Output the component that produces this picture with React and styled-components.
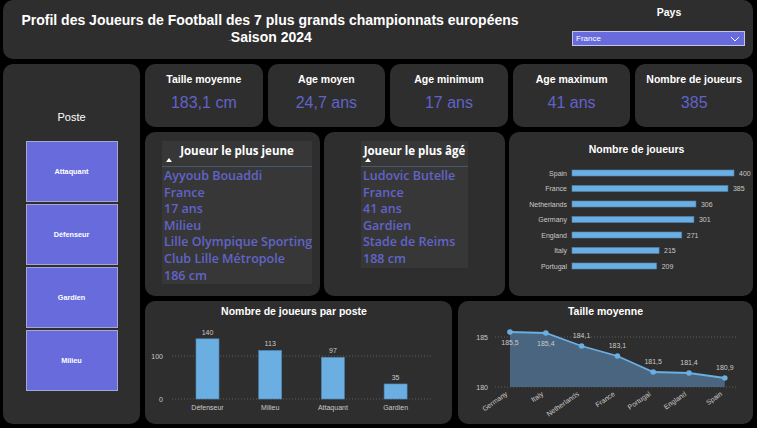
import React from 'react';
import styled, { createGlobalStyle } from 'styled-components';

const GlobalStyle = createGlobalStyle`
  html, body {
    margin: 0;
    padding: 0;
    background: #000;
  }
  body {
    font-family: "Liberation Sans", Arial, sans-serif;
  }
`;

const Page = styled.div`
  width: 757px;
  height: 428px;
  box-sizing: border-box;
  padding: 0 4px 4px 3px;
  display: flex;
  flex-direction: column;
  gap: 5px;
  background: #000;
`;

const Panel = styled.div`
  background: #2f2e2e;
  border-radius: 10px;
  box-sizing: border-box;
  overflow: hidden;
`;

const Header = styled(Panel)`
  height: 59px;
  flex: none;
  display: flex;
`;

const TitleBlock = styled.div`
  width: 534px;
  padding-top: 12px;
  text-align: center;
  color: #fff;
  font-weight: bold;
  font-size: 14px;
  line-height: 17px;
`;

const Dash = styled.span`
  color: #8a8a8a;
  font-size: 8px;
  font-weight: normal;
`;

const PaysBlock = styled.div`
  flex: 1;
  padding: 5px 8px 0 35px;
  display: flex;
  flex-direction: column;
`;

const PaysLabel = styled.div`
  color: #fff;
  font-weight: bold;
  font-size: 10.5px;
  line-height: 14px;
  text-align: center;
  padding-left: 21px;
`;

const Dropdown = styled.div`
  margin-top: 12px;
  height: 15px;
  box-sizing: border-box;
  background: #676bdc;
  border: 1px solid #c3c4e6;
  display: flex;
  align-items: center;
  justify-content: space-between;
  padding: 0 4px 0 3px;
  color: #fff;
  font-size: 8px;
`;

const Body = styled.div`
  height: 360px;
  display: flex;
  gap: 5px;
`;

const Side = styled(Panel)`
  width: 137px;
  flex: none;
  padding-top: 46px;
  display: flex;
  flex-direction: column;
  align-items: center;
`;

const SideTitle = styled.div`
  color: #fff;
  font-size: 11px;
  line-height: 14px;
  margin-bottom: 17px;
`;

const PosteList = styled.div`
  display: flex;
  flex-direction: column;
  gap: 2px;
`;

const PosteButton = styled.div`
  width: 92px;
  height: 61px;
  box-sizing: border-box;
  background: #676bdc;
  border: 1px solid #a6a7cf;
  display: flex;
  align-items: center;
  justify-content: center;
  color: #fff;
  font-weight: bold;
  font-size: 7.3px;
`;

const Main = styled.div`
  flex: 1;
  display: grid;
  grid-template-rows: 63px 164px 123px;
  row-gap: 5px;
`;

const KpiRow = styled.div`
  display: grid;
  grid-template-columns: repeat(5, 1fr);
  column-gap: 5px;
`;

const KpiCard = styled(Panel)`
  padding-top: 9px;
  text-align: center;
`;

const KpiLabel = styled.div`
  color: #fff;
  font-weight: bold;
  font-size: 10.5px;
  line-height: 13px;
`;

const KpiValue = styled.div`
  margin-top: 7px;
  color: #5f63c8;
  font-size: 16px;
  line-height: 20px;
`;

const MidRow = styled.div`
  display: grid;
  grid-template-columns: 175px 181px 1fr;
  column-gap: 4px;
`;

const BottomRow = styled.div`
  display: grid;
  grid-template-columns: 307px 1fr;
  column-gap: 6px;
`;

const PlayerCard = styled(Panel)`
  padding-top: 9px;
  padding-left: ${(p) => p.$offset}px;
`;

const PlayerTable = styled.div`
  width: ${(p) => p.$width}px;
  background: #383737;
  font-family: "Open Sans", "Liberation Sans", sans-serif;
`;

const TableHead = styled.div`
  padding: 3px 0 4px;
  border-bottom: 1px solid #43596f;
  display: flex;
  flex-direction: column;
`;

const HeadText = styled.div`
  color: #fff;
  font-weight: 700;
  font-size: 11.5px;
  line-height: 14px;
  text-align: center;
  white-space: nowrap;
`;

const Caret = styled.span`
  width: 0;
  height: 0;
  margin-left: 4px;
  border-left: 3px solid transparent;
  border-right: 3px solid transparent;
  border-bottom: 4px solid #fff;
`;

const Rows = styled.div`
  padding: 1px 0 0 2px;
`;

const RowText = styled.div`
  color: #6064c9;
  font-size: 12.5px;
  font-weight: 600;
  line-height: 16.6px;
  white-space: nowrap;
`;

const ChartCard = styled(Panel)`
  display: flex;
  flex-direction: column;
`;

const ChartTitle = styled.div`
  color: #fff;
  font-weight: bold;
  font-size: 10.5px;
  line-height: 13px;
  text-align: center;
  padding-top: ${(p) => p.$top}px;
  padding-left: ${(p) => p.$shift || 0}px;
  padding-right: ${(p) => p.$pull || 0}px;
`;

const Chart = styled.svg`
  display: block;
  font-family: "Liberation Sans", Arial, sans-serif;
  font-size: 7px;
`;

const kpis = [
  ['Taille moyenne', '183,1 cm'],
  ['Age moyen', '24,7 ans'],
  ['Age minimum', '17 ans'],
  ['Age maximum', '41 ans'],
  ['Nombre de joueurs', '385'],
];

const youngest = ['Ayyoub Bouaddi', 'France', '17 ans', 'Milieu', 'Lille Olympique Sporting', 'Club Lille Métropole', '186 cm'];
const oldest = ['Ludovic Butelle', 'France', '41 ans', 'Gardien', 'Stade de Reims', '188 cm'];

const countries = [
  ['Spain', 400],
  ['France', 385],
  ['Netherlands', 306],
  ['Germany', 301],
  ['England', 271],
  ['Italy', 215],
  ['Portugal', 209],
];

const postes = [
  ['Défenseur', 140],
  ['Milieu', 113],
  ['Attaquant', 97],
  ['Gardien', 35],
];

const heights = [
  ['Germany', 185.5, '185,5', 'below'],
  ['Italy', 185.4, '185,4', 'below'],
  ['Netherlands', 184.1, '184,1', 'above'],
  ['France', 183.1, '183,1', 'above'],
  ['Portugal', 181.5, '181,5', 'above'],
  ['England', 181.4, '181,4', 'above'],
  ['Spain', 180.9, '180,9', 'above'],
];

const BAR = '#6aaee2';
const BAR_EDGE = '#4d86b4';
const LABEL = '#c9c9c9';

const CountryChart = () => (
  <Chart width="245" height="140">
    {countries.map(([name, v], i) => {
      const y = 17 + i * 15.5;
      const w = v * 0.405;
      return (
        <g key={name}>
          <text x="58" y={y + 2.5} textAnchor="end" fill={LABEL}>{name}</text>
          <rect x="63" y={y - 3} width={w} height="6" fill={BAR} stroke={BAR_EDGE} strokeWidth="0.6" />
          <text x={63 + w + 5} y={y + 2.5} fill={LABEL}>{v}</text>
        </g>
      );
    })}
  </Chart>
);

const PosteChart = () => {
  const base = 81;
  const k = 0.43;
  return (
    <Chart width="307" height="106">
      <line x1="27" x2="288" y1="38" y2="38" stroke="#6a6a6a" strokeWidth="0.8" strokeDasharray="1 2" />
      <line x1="27" x2="288" y1={base} y2={base} stroke="#6a6a6a" strokeWidth="0.8" strokeDasharray="1 2" />
      <text x="18" y="40.5" textAnchor="end" fill={LABEL}>100</text>
      <text x="18" y={base + 2.5} textAnchor="end" fill={LABEL}>0</text>
      {postes.map(([name, v], i) => {
        const x = 51 + i * 62.7;
        const h = v * k;
        return (
          <g key={name}>
            <rect x={x} y={base - h} width="23" height={h} fill={BAR} stroke={BAR_EDGE} strokeWidth="0.6" />
            <text x={x + 11.5} y={base - h - 4} textAnchor="middle" fill={LABEL}>{v}</text>
            <text x={x + 11.5} y={base + 10.5} textAnchor="middle" fill={LABEL}>{name}</text>
          </g>
        );
      })}
    </Chart>
  );
};

const HeightChart = () => {
  const yOf = (v) => 69 - (v - 180) * 10;
  const xOf = (i) => 52 + i * 35.8;
  const pts = heights.map(([, v], i) => `${xOf(i)},${yOf(v)}`).join(' ');
  const area = `${xOf(0)},69 ${pts} ${xOf(heights.length - 1)},69`;
  return (
    <Chart width="295" height="106">
      <line x1="37" x2="280" y1={yOf(185)} y2={yOf(185)} stroke="#6a6a6a" strokeWidth="0.8" strokeDasharray="1 2" />
      <line x1="37" x2="280" y1="69" y2="69" stroke="#6a6a6a" strokeWidth="0.8" strokeDasharray="1 2" />
      <text x="30" y={yOf(185) + 2.5} textAnchor="end" fill={LABEL}>185</text>
      <text x="30" y="71.5" textAnchor="end" fill={LABEL}>180</text>
      <polygon points={area} fill="#4a6580" />
      <polyline points={pts} fill="none" stroke={BAR} strokeWidth="1.8" />
      {heights.map(([name, v, label, pos], i) => {
        const x = xOf(i);
        const y = yOf(v);
        const ly = pos === 'below' ? y + 13 : y - 8;
        return (
          <g key={name}>
            <circle cx={x} cy={y} r="2.8" fill={BAR} />
            <text x={x} y={ly} textAnchor="middle" fill={LABEL}>{label}</text>
            <text
              x={x - 2}
              y="77"
              textAnchor="end"
              fill={LABEL}
              transform={`rotate(-35 ${x - 2} 77)`}
            >
              {name}
            </text>
          </g>
        );
      })}
    </Chart>
  );
};

const PlayerBlock = ({ title, rows, width, offset }) => (
  <PlayerCard $offset={offset}>
    <PlayerTable $width={width}>
      <TableHead>
        <HeadText>{title}</HeadText>
        <Caret />
      </TableHead>
      <Rows>
        {rows.map((r) => (
          <RowText key={r}>{r}</RowText>
        ))}
      </Rows>
    </PlayerTable>
  </PlayerCard>
);

const App = () => (
  <>
    <GlobalStyle />
    <Page>
      <Header>
        <TitleBlock>
          Profil des Joueurs de Football des 7 plus grands championnats européens
          <br />
          <Dash>-</Dash>Saison 2024
        </TitleBlock>
        <PaysBlock>
          <PaysLabel>Pays</PaysLabel>
          <Dropdown>
            <span>France</span>
            <svg width="10" height="6" viewBox="0 0 10 6">
              <polyline points="1,1 5,5 9,1" fill="none" stroke="#fff" strokeWidth="1" />
            </svg>
          </Dropdown>
        </PaysBlock>
      </Header>
      <Body>
        <Side>
          <SideTitle>Poste</SideTitle>
          <PosteList>
            {['Attaquant', 'Défenseur', 'Gardien', 'Milieu'].map((p) => (
              <PosteButton key={p}>{p}</PosteButton>
            ))}
          </PosteList>
        </Side>
        <Main>
          <KpiRow>
            {kpis.map(([label, value]) => (
              <KpiCard key={label}>
                <KpiLabel>{label}</KpiLabel>
                <KpiValue>{value}</KpiValue>
              </KpiCard>
            ))}
          </KpiRow>
          <MidRow>
            <PlayerBlock title="Joueur le plus jeune" rows={youngest} width={150} offset={17} />
            <PlayerBlock title="Joueur le plus âgé" rows={oldest} width={107} offset={37} />
            <ChartCard>
              <ChartTitle $top={11} $shift={11}>Nombre de joueurs</ChartTitle>
              <CountryChart />
            </ChartCard>
          </MidRow>
          <BottomRow>
            <ChartCard>
              <ChartTitle $top={4} $pull={9}>Nombre de joueurs par poste</ChartTitle>
              <PosteChart />
            </ChartCard>
            <ChartCard>
              <ChartTitle $top={4}>Taille moyenne</ChartTitle>
              <HeightChart />
            </ChartCard>
          </BottomRow>
        </Main>
      </Body>
    </Page>
  </>
);

export default App;
